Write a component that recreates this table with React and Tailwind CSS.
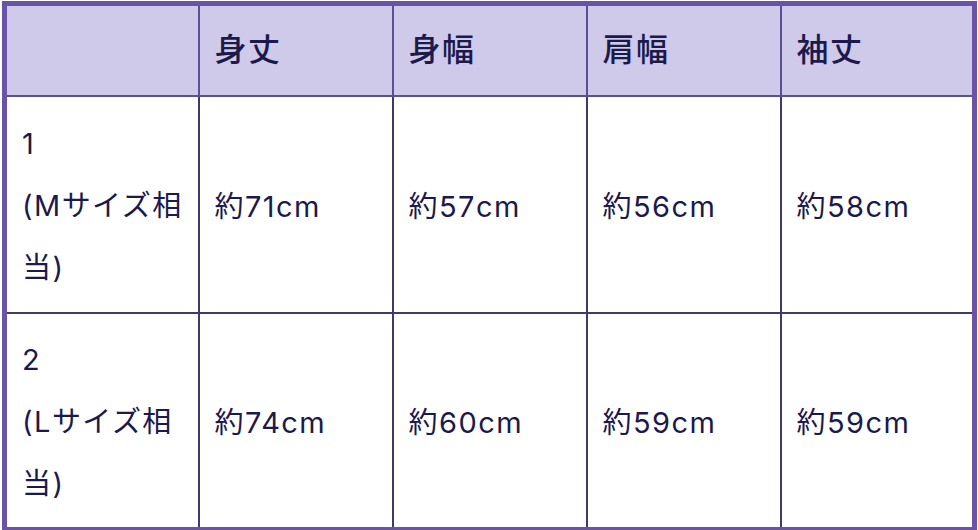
const headers = ['', '身丈', '身幅', '肩幅', '袖丈'];

const rows = [
  { label: ['1', '(Mサイズ相', '当)'], values: ['約71cm', '約57cm', '約56cm', '約58cm'] },
  { label: ['2', '(Lサイズ相', '当)'], values: ['約74cm', '約60cm', '約59cm', '約59cm'] },
];

const App = () => {
  return (
    <div
      className="w-[978px] h-[530px] bg-white pl-[2px] pt-[1px] overflow-hidden"
      style={{ fontFamily: 'Inter, "Noto Sans CJK JP", sans-serif' }}
    >
      <table className="w-[975px] table-fixed border-collapse border-[5px] border-[#6853a6] text-[#1c1a4b]">
        <thead>
          <tr className="h-[92px] bg-[#cfcaea]">
            {headers.map((h, i) => (
              <th
                key={i}
                className="border-2 border-[#5b4f96] px-[15px] text-left align-middle text-[32px] font-medium tracking-[0.05em] leading-none"
              >
                {h}
              </th>
            ))}
          </tr>
        </thead>
        <tbody>
          {rows.map((row, r) => (
            <tr key={r} className="h-[217px]">
              <td className="border-2 border-[#3f3a6c] px-[15px] pt-[4px] align-middle text-[29px] tracking-[0.05em] leading-[62px]">
                {row.label.map((line, k) => (
                  <div key={k} className="whitespace-nowrap">{line}</div>
                ))}
              </td>
              {row.values.map((v, k) => (
                <td
                  key={k}
                  className="border-2 border-[#3f3a6c] px-[15px] pt-[4px] align-middle text-[29px] tracking-[0.05em] leading-none"
                >
                  {v}
                </td>
              ))}
            </tr>
          ))}
        </tbody>
      </table>
    </div>
  );
};

export default App;
